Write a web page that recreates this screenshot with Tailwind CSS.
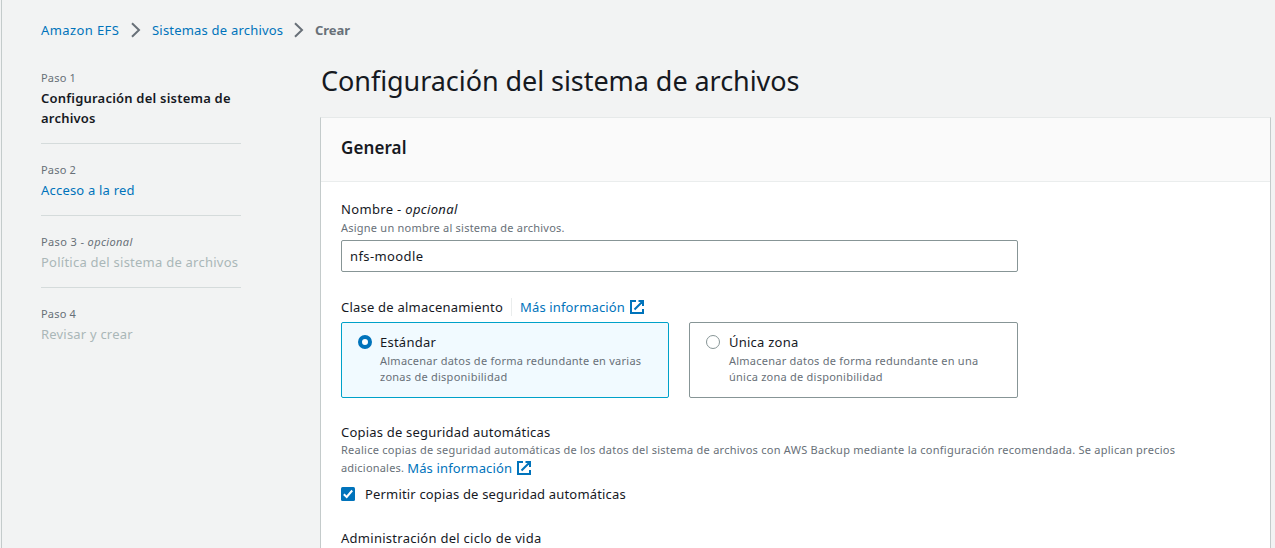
<!DOCTYPE html>
<html lang="es">
<head>
<meta charset="utf-8">
<title>Amazon EFS</title>
<script src="https://cdn.jsdelivr.net/npm/@tailwindcss/browser@4"></script>
</head>
<body class="h-[548px] overflow-hidden bg-[#f2f3f3] pl-px font-['Noto_Sans',sans-serif] text-[13px] leading-5 tracking-[0.2px] text-[#16191f]">
<div class="h-full border-l border-[#c4cbcb] pl-[39px] whitespace-nowrap">
  <nav class="flex h-10 items-center pt-5 text-[#0073bb]">
    <a class="w-[90px] tracking-[0.4px]">Amazon EFS</a>
    <svg class="mr-[11px] h-4 w-[10px]" viewBox="0 0 10 16" fill="none" stroke="#687078" stroke-width="2"><path d="M1 1.2 8 8 1 14.8"/></svg>
    <a class="w-[142px]">Sistemas de archivos</a>
    <svg class="mr-[11px] h-4 w-[10px]" viewBox="0 0 10 16" fill="none" stroke="#687078" stroke-width="2"><path d="M1 1.2 8 8 1 14.8"/></svg>
    <b class="font-bold tracking-[-0.05px] text-[#687078]">Crear</b>
  </nav>
  <div class="flex">
    <aside class="w-[200px] shrink-0 pt-7">
      <div class="border-b border-[#d5dbdb] pb-[15px]">
        <p class="text-[11px] text-[#687078]">Paso 1</p>
        <p class="font-semibold tracking-[0.21px]">Configuración del sistema de<br>archivos</p>
      </div>
      <div class="border-b border-[#d5dbdb] pt-4 pb-[15px]">
        <p class="text-[11px] text-[#687078]">Paso 2</p>
        <a class="block text-[#0073bb]">Acceso a la red</a>
      </div>
      <div class="border-b border-[#d5dbdb] pt-4 pb-[15px]">
        <p class="text-[11px] tracking-[0.38px] text-[#687078]">Paso 3 - <i>opcional</i></p>
        <p class="tracking-[0.24px] text-[#aab7b8]">Política del sistema de archivos</p>
      </div>
      <div class="pt-4">
        <p class="text-[11px] text-[#687078]">Paso 4</p>
        <p class="text-[#aab7b8]">Revisar y crear</p>
      </div>
    </aside>
    <main class="ml-[79px] w-[951px] shrink-0 pt-[23px]">
      <h1 class="h-[54px] pl-px text-[27px] leading-9 tracking-[-0.06px]">Configuración del sistema de archivos</h1>
      <section class="h-[431px] overflow-hidden border-x border-t border-x-[#c4cbcb] border-t-[#e6e9e9] bg-white">
        <header class="flex h-16 items-center border-b border-[#eaeded] bg-[#fafafa] px-5 pb-1">
          <h2 class="text-[17px] font-semibold tracking-[0.1px]">General</h2>
        </header>
        <div class="w-[717px] px-5 pt-[17px]">
          <p class="tracking-[0.33px]">Nombre - <i>opcional</i></p>
          <p class="mt-px text-[11px] leading-4 tracking-[0.23px] text-[#687078]">Asigne un nombre al sistema de archivos.</p>
          <div class="mt-1 flex h-8 items-center rounded-xs border border-[#879596] px-2 tracking-[0.4px]">nfs-moodle</div>
          <div class="mt-[25px] flex items-center">
            <span class="w-[170px] tracking-[0.22px]">Clase de almacenamiento</span>
            <span class="h-[18px] border-l border-[#eaeded] pl-2"></span>
            <a class="flex items-center gap-[5px] tracking-[0.15px] text-[#0073bb]">Más información
              <svg class="h-[14px] w-[14px]" viewBox="0 0 14 14" fill="none" stroke="#0073bb" stroke-width="2"><path d="M6 1H1v12h12V9M8.5 1H13v5M12.8 1.2 4.5 9.5"/></svg></a>
          </div>
          <div class="mt-[5px] flex h-[76px] gap-5">
            <div class="flex w-[328px] rounded-xs border border-[#00a1c9] bg-[#f1faff] pt-[9px] pl-4">
              <span class="mt-[3px] mr-2 h-[14px] w-[14px] shrink-0 rounded-full border-4 border-[#0073bb] bg-white"></span>
              <div>
                <p class="tracking-[0.24px]">Estándar</p>
                <p class="mt-px text-[11px] leading-4 tracking-[0.25px] text-[#687078]">Almacenar datos de forma redundante en varias<br>zonas de disponibilidad</p>
              </div>
            </div>
            <div class="flex w-[329px] rounded-xs border border-[#879596] bg-white pt-[9px] pl-4">
              <span class="mt-[3px] mr-[9px] h-[14px] w-[14px] shrink-0 rounded-full border border-[#879596] bg-white"></span>
              <div>
                <p class="tracking-[0.24px]">Única zona</p>
                <p class="mt-px text-[11px] leading-4 tracking-[0.24px] text-[#687078]">Almacenar datos de forma redundante en una<br>única zona de disponibilidad</p>
              </div>
            </div>
          </div>
          <p class="mt-6">Copias de seguridad automáticas</p>
          <p class="text-[11px] leading-4 tracking-[0.255px] text-[#687078]">Realice copias de seguridad automáticas de los datos del sistema de archivos con AWS Backup mediante la configuración recomendada. Se aplican precios</p>
          <div class="flex h-5 items-center gap-[3px] text-[11px] text-[#687078]">adicionales.
            <a class="flex items-center gap-[5px] text-[13px] tracking-[0.15px] text-[#0073bb]">Más información
              <svg class="h-[14px] w-[14px]" viewBox="0 0 14 14" fill="none" stroke="#0073bb" stroke-width="2"><path d="M6 1H1v12h12V9M8.5 1H13v5M12.8 1.2 4.5 9.5"/></svg></a>
          </div>
          <div class="mt-[6px] flex items-center gap-[10px]">
            <svg class="h-[14px] w-[14px]" viewBox="0 0 14 14" fill="none"><rect width="14" height="14" rx="1.5" fill="#0073bb"/><path d="M2.8 7.2 5.7 10 11.2 3.5" stroke="#fff" stroke-width="2"/></svg>
            <span class="tracking-[0.17px]">Permitir copias de seguridad automáticas</span>
          </div>
          <p class="mt-6 tracking-[0.27px]">Administración del ciclo de vida</p>
        </div>
      </section>
    </main>
  </div>
</div>
</body>
</html>
